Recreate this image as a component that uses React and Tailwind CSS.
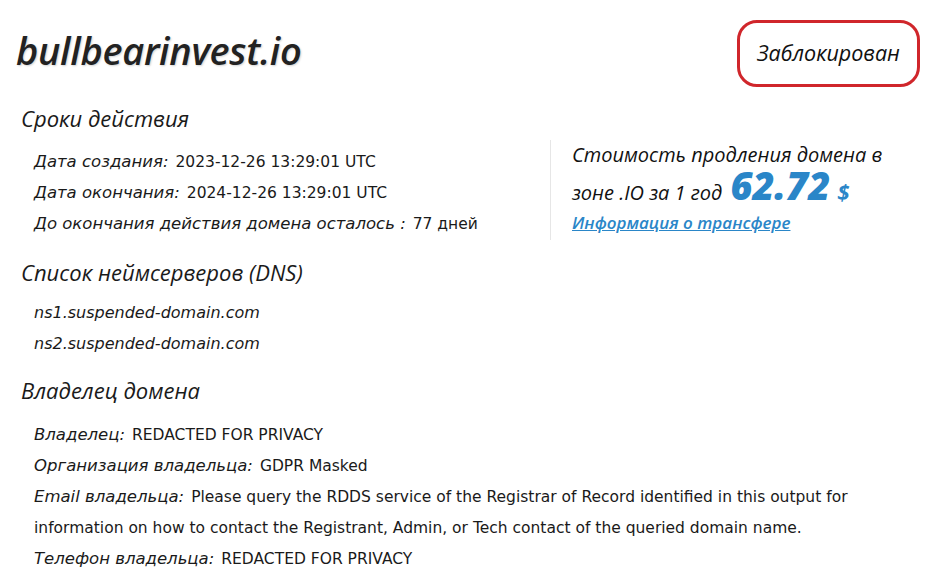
import React from "react";

const baseFont = { fontFamily: '"Open Sans", "DejaVu Sans", sans-serif' };
const rowFont = { fontFamily: '"DejaVu Sans", "Open Sans", sans-serif' };

const Row = ({ label, children }) => (
  <div className="leading-[31px] text-[15.5px] text-[#1a1a1a]" style={rowFont}>
    <span className="italic text-[16.5px] leading-[20px]">{label}:</span>
    <span className="ml-[7px]">{children}</span>
  </div>
);

const App = () => {
  return (
    <div className="w-[947px] h-[579px] overflow-hidden bg-white px-4 pt-5 text-[#1a1a1a]" style={baseFont}>
      {/* Header */}
      <div className="flex justify-between items-start">
        <h1 className="mt-[8px] text-[38px] leading-[44px] font-semibold italic tracking-[-0.3px] text-[#222] [text-shadow:1px_1px_2px_rgba(0,0,0,0.18)]">
          bullbearinvest.io
        </h1>
        <div className="mr-[11px] h-[67px] w-[183px] rounded-[20px] border-[3px] border-[#d0262b] flex items-center justify-center text-[21.5px] italic text-[#111]">
          Заблокирован
        </div>
      </div>

      {/* Dates + price */}
      <div className="mt-[16px] flex">
        <div className="w-[534px]">
          <h2 className="pl-[5px] text-[22px] leading-[30px] italic text-[#1a1a1a]">Сроки действия</h2>
          <div className="mt-[14px] pl-[18px]">
            <Row label="Дата создания">2023-12-26 13:29:01 UTC</Row>
            <Row label="Дата окончания">2024-12-26 13:29:01 UTC</Row>
            <Row label="До окончания действия домена осталось ">77 дней</Row>
          </div>
        </div>
        <div className="mt-[37px] h-[100px] border-l border-[#e6e6e6] pl-[21px]">
          <p className="text-[20px] leading-[30px] italic text-[#111]">Стоимость продления домена в</p>
          <p className="text-[20px] leading-[30px] italic text-[#111] flex items-baseline">
            зоне .IO за 1 год
            <span className="ml-[8px] text-[38px] leading-[30px] font-extrabold italic text-[#2a86c8]">62.72</span>
            <span className="ml-[7px] text-[22px] font-bold italic text-[#2a86c8]">$</span>
          </p>
          <a href="#" className="block text-[17px] leading-[30px] font-semibold italic text-[#2a86c8] underline">
            Информация о трансфере
          </a>
        </div>
      </div>

      {/* DNS */}
      <h2 className="mt-[17px] pl-[5px] text-[22px] leading-[30px] italic">Список неймсерверов (DNS)</h2>
      <div className="mt-[11px] pl-[18px] text-[16px] leading-[30.5px] italic" style={rowFont}>
        <div>ns1.suspended-domain.com</div>
        <div>ns2.suspended-domain.com</div>
      </div>

      {/* Owner */}
      <h2 className="mt-[16px] pl-[5px] text-[22px] leading-[30px] italic">Владелец домена</h2>
      <div className="mt-[15px] pl-[18px] w-[850px]">
        <Row label="Владелец">REDACTED FOR PRIVACY</Row>
        <Row label="Организация владельца">GDPR Masked</Row>
        <Row label="Email владельца">
          Please query the RDDS service of the Registrar of Record identified in this output for information on how to contact the Registrant, Admin, or Tech contact of the queried domain name.
        </Row>
        <Row label="Телефон владельца">REDACTED FOR PRIVACY</Row>
      </div>
    </div>
  );
};

export default App;
